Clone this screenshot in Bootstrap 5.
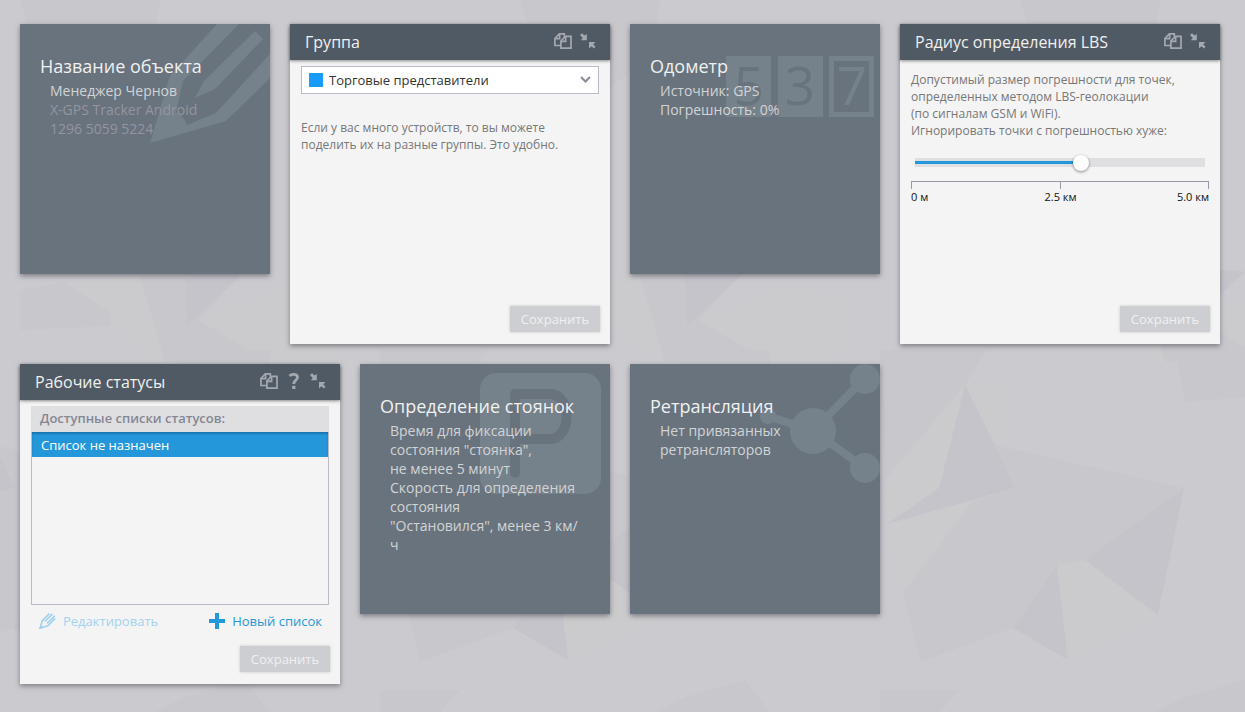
<!DOCTYPE html>
<html lang="ru">
<head>
<meta charset="utf-8">
<meta name="viewport" content="width=device-width, initial-scale=1">
<title>Настройки объекта</title>
<link href="https://cdn.jsdelivr.net/npm/bootstrap@5.3.0/dist/css/bootstrap.min.css" rel="stylesheet">
<style>
  body {
    font-family: "Open Sans", sans-serif;
    background-color: #cbcacf;
    background-image: url("data:image/svg+xml,%3Csvg xmlns='http://www.w3.org/2000/svg' width='500' height='712' viewBox='0 0 500 712'%3E%3Cg fill='%23cbcbcd'%3E%3Cpath d='M465 385 385 485 387 523 439 488zM385 525 472 502 403 593zM57 565 85 560 158 615 68 660zM198 320 290 288 345 300 330 390 270 362zM136 276 162 364 110 320 70 284zM465 385H590L500 450z'/%3E%3C/g%3E%3Cg fill='%23c8c7cc'%3E%3Cpath d='M495 445 684 488 585 560 557 565 513 628 420 662 403 593 472 502 515 488zM-5 445 184 488 85 560 57 565 13 628 -80 662 -97 593 -28 502 15 488zM380 350H487L465 385 385 480zM175 350H270V395L185 402zM20 0H160L150 60 60 120zM64 282 110 312V326L20 330V290zM138 270 245 270 198 320 270 362 165 362zM155 712 185 697 245 680 270 712zM380 690H460L440 712H380z'/%3E%3C/g%3E%3Cg fill='%23c5c4ca'%3E%3Cpath d='M465 385 439 488 387 524 515 488 495 445zM-35 385 -61 488 -113 524 15 488 -5 445zM184 488 158 615 85 560zM57 565 68 660 13 628zM185 270 245 272 187 325z'/%3E%3C/g%3E%3C/svg%3E");
  }
  .tile { box-shadow: 0 2px 5px rgba(70, 70, 80, .6); }
  .tile-grid { gap: 20px; padding: 24px 20px; }
  .tile-sm { width: 250px; height: 250px; background: #68737e; padding: 30px 20px 0; }
  .tile-sm h2 { font-size: 18px; line-height: 25px; color: #f0f0f0; margin: 0 0 2px; }
  .tile-sm p { font-size: 14px; line-height: 19px; color: #d3d3d5; margin: 0; padding: 0 10px; }
  .tile-sm p.faded { color: #9594a0; }
  .tile-art { position: absolute; top: 0; left: 0; width: 100%; height: 100%; color: #76828b; }
  .tile-text { position: relative; }
  .tile-lg { width: 320px; height: 320px; background: #f4f4f4; }
  .tile-head { height: 36px; padding: 0 14px 0 15px; background: #505a64; box-shadow: 0 1px 3px rgba(0, 0, 0, .45); }
  .tile-head h2 { font-size: 16px; line-height: 24px; color: #f0f0f0; margin: 0; }
  .icon-btn { color: #a4a8af; line-height: 0; padding: 0 0 2px; }
  .icon-help { margin: 0 10px; }
  .tile-body { padding: 6px 11px 0; }
  .tile-foot { padding: 0 10px 12px; }
  .btn-save { width: 90px; height: 26px; font-size: 13px; line-height: 18px; }
  .btn-save:disabled { background: #cdced2; color: #f0f0f1; opacity: 1; box-shadow: 0 0 3px rgba(0, 0, 0, .18); }
  .hint { font-size: 12px; line-height: 17px; color: #777; margin: 0; }
  .group-field { margin-bottom: 25px; }
  .radius-label { margin: 5px 0 15px; }
  .radius-field { padding: 0 4px; margin-bottom: 11px; }
  .group-select { height: 28px; padding: 0 32px 0 27px; font-size: 13px; line-height: 18px; color: #333; border: 1px solid #bbbac9; background-color: #fff; background-size: 13px 10px; background-position: right 6px center;
    background-image: url("data:image/svg+xml,%3Csvg xmlns='http://www.w3.org/2000/svg' viewBox='0 0 13 10'%3E%3Cpath d='M2 2l4.500 4.500L11 2' fill='none' stroke='%238b8a99' stroke-width='2'/%3E%3C/svg%3E"); }
  .swatch { position: absolute; left: 8px; top: 7px; width: 14px; height: 14px; background: #179bff; pointer-events: none; }
  .radius-range { appearance: none; display: block; width: 100%; height: 16px; margin: 0; background: none; }
  .radius-range::-webkit-slider-runnable-track { height: 9px; background: linear-gradient(#2497dc, #2497dc) left center / var(--fill) 3px no-repeat #dfdfe1; }
  .radius-range::-webkit-slider-thumb { appearance: none; width: 16px; height: 16px; margin-top: -3px; border-radius: 50%; background: #fff; box-shadow: 0 1px 3px rgba(0, 0, 0, .45); }
  .ruler { height: 8px; border: 1px solid #9a99aa; border-bottom: 0; }
  .ruler span { width: 1px; background: #9a99aa; }
  .ruler-labels { font-size: 11px; line-height: 16px; color: #111; }
  .status-head { height: 26px; padding: 3px 9px; font-size: 13px; line-height: 18px; font-weight: 600; color: #858792; background: #dfdfe2; }
  .status-box { height: 173px; border: 1px solid #bbbac4; border-top: 0; }
  .status-box .list-group-item { padding: 4px 9px 3px; font-size: 13px; line-height: 18px; color: #fff; background: #2497db; box-shadow: inset 0 2px 2px rgba(0, 40, 80, .3); }
  .actions { padding: 7px 7px 0 8px; }
  .action { font-size: 13px; line-height: 18px; color: #2497db; gap: 7px; }
  .action:disabled { color: #a3d2ee; opacity: 1; }
</style>
</head>
<body>
<svg class="d-none" aria-hidden="true">
  <symbol id="i-copy" viewBox="0 0 18 16"><g fill="none" stroke="currentColor" stroke-width="1.700"><path d="M6.500 12.500H.9V5.500L5.300.9H10.300V3.500"/><path d="M5.600 1V5.600H1"/><path d="M6.900 15.100V8L11.300 3.400H17V15.100z"/><path d="M11.600 3.500V8.400H7"/></g></symbol>
  <symbol id="i-shrink" viewBox="0 0 16 16"><path fill="currentColor" d="M0 2 2 0.300 4.500 2.500 6.800 1V7.300H0.800L2.800 5zM9 9H15.500L13.200 11.200 15.500 13.800 14 15.500 11.500 13.300 9 15.500z"/></symbol>
  <symbol id="i-help" viewBox="0 0 12 16"><path fill="none" stroke="currentColor" stroke-width="2.800" d="M1.500 3C3.500.7 9.500.6 9.500 4.200 9.500 7.300 5.800 7.300 5.800 11"/><path fill="currentColor" d="M4.200 12.800h3.200V16H4.200z"/></symbol>
  <symbol id="i-pencil" viewBox="0 0 17 16"><g fill="none" stroke="currentColor" stroke-width="1.700"><path d="M10.500.5 3.300 7.800 1.200 15.200 8.800 12.800 16.200 5.300"/><path d="M13.500.8 6 8.500M15.800 2.800 8 10.500"/></g><path fill="currentColor" d="M0 16 1.500 11.500 4.800 14.700z"/></symbol>
</svg>

<main class="tile-grid d-flex flex-wrap align-items-start">

  <section class="tile tile-sm position-relative overflow-hidden">
    <svg class="tile-art" viewBox="0 0 250 250" aria-hidden="true"><path fill="currentColor" d="M197 0H219L163 57 156 88Q164 93 167 101L196 89 250 30V54L206 97 130 119 150 52zM235 7 243 15 195 65 175 74 184 57z"/></svg>
    <div class="tile-text"><h2>Название объекта</h2><p>Менеджер Чернов</p><p class="faded">X-GPS Tracker Android<br>1296 5059 5224</p></div>
  </section>

  <section class="tile tile-lg d-flex flex-column">
    <header class="tile-head d-flex align-items-center">
      <h2 class="me-auto">Группа</h2>
      <button class="icon-btn btn border-0" type="button" aria-label="Копировать"><svg width="18" height="16"><use href="#i-copy"/></svg></button>
      <button class="icon-btn btn border-0 ms-2" type="button" aria-label="Свернуть"><svg width="16" height="16"><use href="#i-shrink"/></svg></button>
    </header>
    <div class="tile-body flex-grow-1">
      <div class="group-field position-relative">
        <select class="form-select group-select rounded-0" aria-label="Группа"><option>Торговые представители</option></select>
        <span class="swatch"></span>
      </div>
      <p class="hint">Если у вас много устройств, то вы можете<br>поделить их на разные группы. Это удобно.</p>
    </div>
    <footer class="tile-foot text-end"><button class="btn btn-save border-0 rounded-0 p-0" type="button" disabled>Сохранить</button></footer>
  </section>

  <section class="tile tile-sm position-relative overflow-hidden">
    <svg class="tile-art" viewBox="0 0 250 250" aria-hidden="true">
      <g fill="currentColor"><path d="M96 32h45v61H96zM148 32h45v61h-45z"/><path fill-rule="evenodd" d="M199 32h45v61h-45zM204 37v51h35V37z"/></g>
      <g font-size="53" text-anchor="middle" fill="#68737e"><text x="119" y="81">5</text><text x="170" y="81">3</text><text x="222" y="81" fill="currentColor">7</text></g>
    </svg>
    <div class="tile-text"><h2>Одометр</h2><p>Источник: GPS<br>Погрешность: 0%</p></div>
  </section>

  <section class="tile tile-lg d-flex flex-column">
    <header class="tile-head d-flex align-items-center">
      <h2 class="me-auto">Радиус определения LBS</h2>
      <button class="icon-btn btn border-0" type="button" aria-label="Копировать"><svg width="18" height="16"><use href="#i-copy"/></svg></button>
      <button class="icon-btn btn border-0 ms-2" type="button" aria-label="Свернуть"><svg width="16" height="16"><use href="#i-shrink"/></svg></button>
    </header>
    <div class="tile-body flex-grow-1">
      <label class="hint radius-label d-block" for="radius">Допустимый размер погрешности для точек,<br>определенных методом LBS-геолокации<br>(по сигналам GSM и WiFi).<br>Игнорировать точки с погрешностью хуже:</label>
      <div class="radius-field"><input class="radius-range" id="radius" type="range" min="0" max="5000" step="25" value="2875" style="--fill:57.5%"></div>
      <div class="ruler d-flex justify-content-center"><span></span></div>
      <div class="ruler-labels d-flex justify-content-between"><span>0 м</span><span class="ms-3">2.5 км</span><span>5.0 км</span></div>
    </div>
    <footer class="tile-foot text-end"><button class="btn btn-save border-0 rounded-0 p-0" type="button" disabled>Сохранить</button></footer>
  </section>

  <section class="tile tile-lg d-flex flex-column">
    <header class="tile-head d-flex align-items-center">
      <h2 class="me-auto">Рабочие статусы</h2>
      <button class="icon-btn btn border-0" type="button" aria-label="Копировать"><svg width="18" height="16"><use href="#i-copy"/></svg></button>
      <button class="icon-btn icon-help btn border-0" type="button" aria-label="Справка"><svg width="12" height="16"><use href="#i-help"/></svg></button>
      <button class="icon-btn btn border-0" type="button" aria-label="Свернуть"><svg width="16" height="16"><use href="#i-shrink"/></svg></button>
    </header>
    <div class="tile-body flex-grow-1">
      <div class="status-head">Доступные списки статусов:</div>
      <div class="status-box list-group rounded-0"><button type="button" class="list-group-item list-group-item-action border-0">Список не назначен</button></div>
      <div class="actions d-flex justify-content-between">
        <button class="action btn border-0 p-0 d-flex align-items-center" type="button" disabled><svg width="17" height="16"><use href="#i-pencil"/></svg>Редактировать</button>
        <button class="action btn border-0 p-0 d-flex align-items-center" type="button"><svg width="16" height="16"><path fill="currentColor" d="M6 0h4v6h6v4h-6v6H6v-6H0V6h6z"/></svg>Новый список</button>
      </div>
    </div>
    <footer class="tile-foot text-end"><button class="btn btn-save border-0 rounded-0 p-0" type="button" disabled>Сохранить</button></footer>
  </section>

  <section class="tile tile-sm position-relative overflow-hidden">
    <svg class="tile-art" viewBox="0 0 250 250" aria-hidden="true"><rect x="120" y="9" width="121" height="121" rx="16" fill="currentColor"/><path d="M155 109V30H190C212 30 212 75 190 75H155" fill="none" stroke="#68737e" stroke-width="10" stroke-linecap="round" stroke-linejoin="round"/></svg>
    <div class="tile-text"><h2>Определение стоянок</h2><p>Время для фиксации<br>состояния "стоянка",<br>не менее 5 минут<br>Скорость для определения состояния<br>"Остановился", менее 3 км/<wbr>ч</p></div>
  </section>

  <section class="tile tile-sm position-relative overflow-hidden">
    <svg class="tile-art" viewBox="0 0 250 250" aria-hidden="true"><g fill="currentColor" stroke="currentColor"><path d="M138 52 183 67 235 14M183 67 235 104" fill="none" stroke-width="8"/><g stroke="none"><circle cx="183" cy="67" r="23"/><circle cx="235" cy="15" r="15"/><circle cx="235" cy="104" r="15"/><circle cx="138" cy="52" r="8"/></g></g></svg>
    <div class="tile-text"><h2>Ретрансляция</h2><p>Нет привязанных<br>ретрансляторов</p></div>
  </section>

</main>
<script src="https://cdn.jsdelivr.net/npm/bootstrap@5.3.0/dist/js/bootstrap.bundle.min.js"></script>
</body>
</html>
